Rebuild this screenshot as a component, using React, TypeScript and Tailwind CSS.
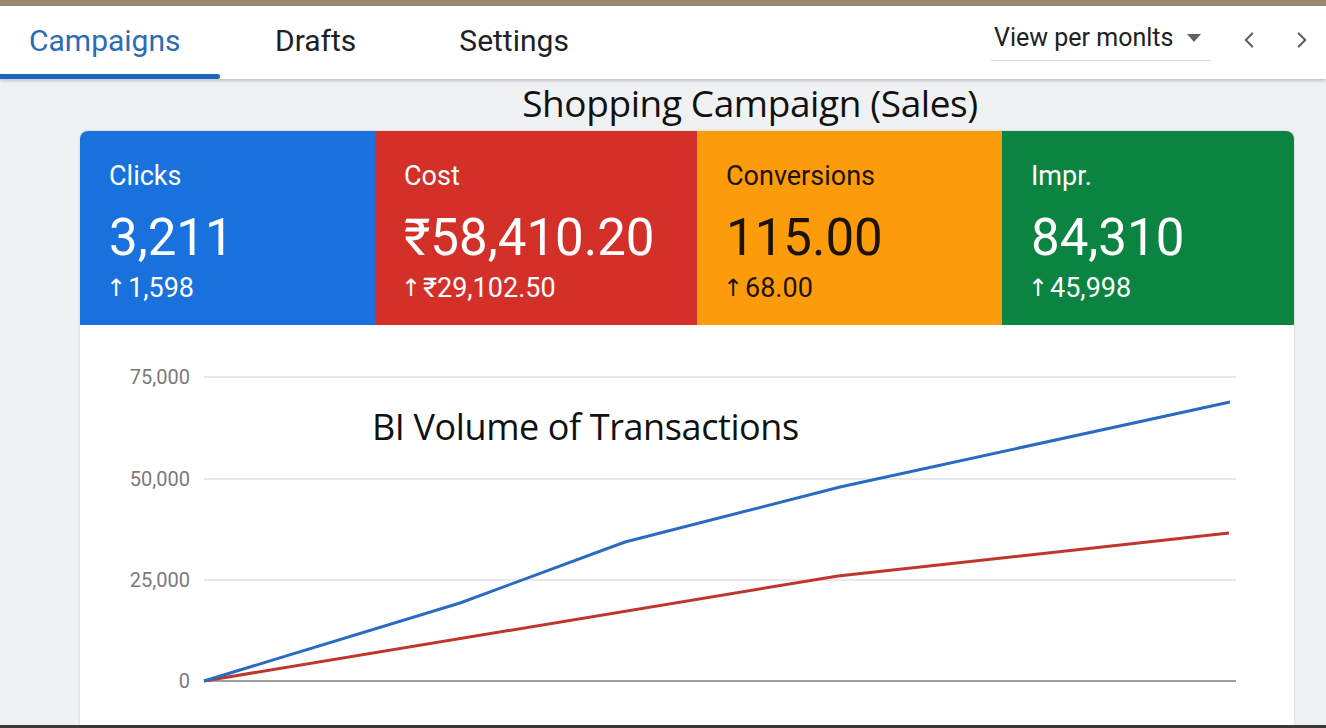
import { ChevronLeft, ChevronRight } from 'lucide-react';

interface Metric {
  label: string;
  value: string;
  delta: string;
  bg: string;
  text: string;
  width: string;
}

const metrics: Metric[] = [
  { label: 'Clicks', value: '3,211', delta: '1,598', bg: 'bg-[#1871dc]', text: 'text-white', width: 'w-[295px]' },
  { label: 'Cost', value: '₹58,410.20', delta: '₹29,102.50', bg: 'bg-[#d4302a]', text: 'text-white', width: 'w-[322px]' },
  { label: 'Conversions', value: '115.00', delta: '68.00', bg: 'bg-[#fd9c0b]', text: 'text-[#1d1208]', width: 'w-[305px]' },
  { label: 'Impr.', value: '84,310', delta: '45,998', bg: 'bg-[#0b8341]', text: 'text-white', width: 'flex-1' },
];

// chart coordinates are relative to the card's left edge and the chart's top
const gridY = [
  { y: 52, label: '75,000' },
  { y: 154, label: '50,000' },
  { y: 255, label: '25,000' },
  { y: 356, label: '0' },
];

const bluePoints = '124,356 380,278 545,217 760,162 1150,77';
const redPoints = '124,356 758,251 1149,208';

function MetricTile({ m }: { m: Metric }) {
  return (
    <div className={`${m.width} ${m.bg} ${m.text} pl-[29px] pt-[27px] flex flex-col`}>
      <div className="text-[27px] leading-[36px]">{m.label}</div>
      <div className="text-[51px] leading-[60px] mt-[14px]">{m.value}</div>
      <div className="text-[27px] leading-[32px] mt-[4px] flex items-center">
        <span className="text-[24px] w-[22px] -ml-[3px] font-['DejaVu_Sans',sans-serif] leading-[32px]">↑</span>
        {m.delta}
      </div>
    </div>
  );
}

function Chart() {
  return (
    <div className="relative h-[400px] bg-white">
      <svg width="1214" height="400" className="block">
        {gridY.map((g, i) => (
          <g key={g.label}>
            <line
              x1="124"
              x2="1156"
              y1={g.y}
              y2={g.y}
              stroke={i === gridY.length - 1 ? '#9e9e9e' : '#e2e2e2'}
              strokeWidth={i === gridY.length - 1 ? 2 : 1.5}
            />
            <text
              x="110"
              y={g.y + 7}
              textAnchor="end"
              fontSize="20"
              fill="#7a7a7a"
              fontFamily="Roboto, 'Liberation Sans', sans-serif"
            >
              {g.label}
            </text>
          </g>
        ))}
        <polyline points={redPoints} fill="none" stroke="#c0352d" strokeWidth="3" strokeLinejoin="round" />
        <polyline points={bluePoints} fill="none" stroke="#2a6bc1" strokeWidth="3" strokeLinejoin="round" />
      </svg>
      <div className="absolute left-[292px] top-[78px] text-[36px] leading-[48px] text-[#111] font-['Open_Sans',sans-serif] tracking-[-0.4px]">
        BI Volume of Transactions
      </div>
    </div>
  );
}

export default function App() {
  return (
    <div className="h-[728px] w-full overflow-hidden flex flex-col bg-[#f0f1f3] font-['Roboto','Liberation_Sans',sans-serif]">
      <div className="h-[6px] bg-[#9d8871]" />

      {/* Header tabs */}
      <div className="relative z-10 h-[73px] bg-white shadow-[0_2px_3px_rgba(0,0,0,0.18)] flex items-stretch">
        <div className="w-[220px] flex flex-col">
          <div className="flex-1 flex items-center pl-[29px] text-[30px] text-[#2c6bb6]">Campaigns</div>
          <div className="h-[5px] bg-[#1c66c1] rounded-r-sm" />
        </div>
        <div className="flex items-center pb-[5px] ml-[55px] text-[30px] text-[#202124]">Drafts</div>
        <div className="flex items-center pb-[5px] ml-[103px] text-[30px] text-[#202124]">Settings</div>

        <div className="ml-auto flex items-center pb-[5px] pr-[11px]">
          <div className="w-[220px] h-[42px] border-b border-[#d6d6d6] flex items-center pl-[3px]">
            <span className="text-[25px] text-[#202124] mt-[-4px]">View per monlts</span>
            <svg width="14" height="8" viewBox="0 0 14 8" className="ml-[14px] mt-[-3px]">
              <path d="M0 0 L14 0 L7 8 Z" fill="#5f6368" />
            </svg>
          </div>
          <ChevronLeft size={26} strokeWidth={2} color="#5f6368" className="ml-[25px]" />
          <ChevronRight size={26} strokeWidth={2} color="#5f6368" className="ml-[27px]" />
        </div>
      </div>

      {/* Title */}
      <div className="h-[52px] flex items-center justify-center pl-[174px]">
        <div className="text-[37px] leading-[44px] text-[#111] font-['Open_Sans',sans-serif] tracking-[-0.4px] mt-[-4px]">
          Shopping Campaign (Sales)
        </div>
      </div>

      {/* Card */}
      <div className="ml-[80px] mr-[32px] flex-1 rounded-t-lg overflow-hidden shadow-[0_0_3px_rgba(0,0,0,0.15)] flex flex-col">
        <div className="h-[195px] flex">
          {metrics.map((m) => (
            <MetricTile key={m.label} m={m} />
          ))}
        </div>
        <Chart />
      </div>

      <div className="h-[3px] bg-[#3b3733]" />
    </div>
  );
}
